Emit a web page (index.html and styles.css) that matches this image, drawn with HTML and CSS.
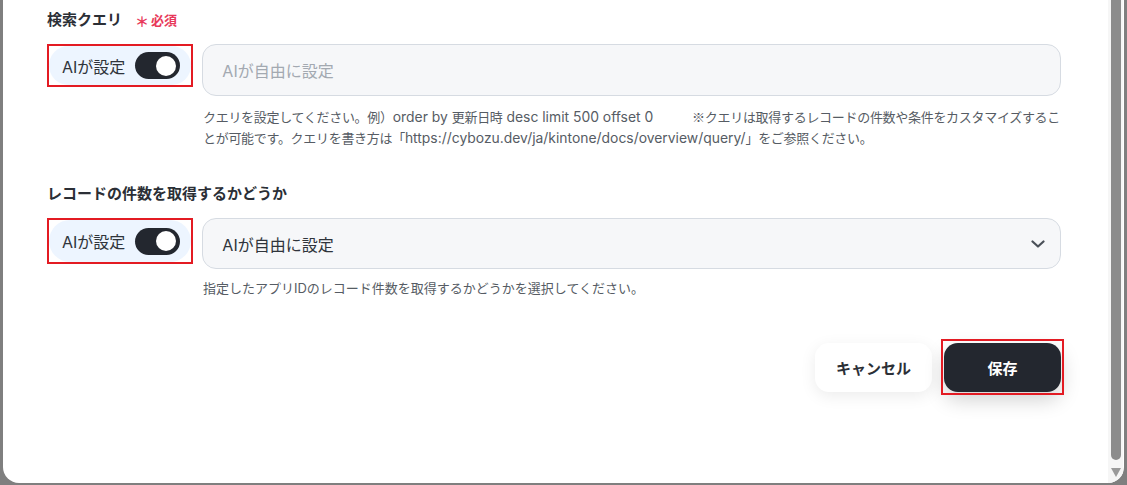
FILE: index.html
```html
<!DOCTYPE html>
<html lang="ja">
<head>
<meta charset="utf-8">
<title>設定</title>
<link rel="stylesheet" href="styles.css">
</head>
<body>
<div class="modal">
  <div class="modal-body">
    <section class="field">
      <div class="field-label">検索クエリ<span class="req"><span class="req-mark">＊</span>必須</span></div>
      <div class="field-row">
        <div class="ai-frame">
          <div class="ai-toggle">
            <span class="ai-text">AIが設定</span>
            <span class="switch"><span class="knob"></span></span>
          </div>
        </div>
        <div class="input placeholder">AIが自由に設定</div>
      </div>
      <p class="help help-query">クエリを設定してください。例）<span class="en">order by </span>更新日時<span class="en"> desc limit 500 offset 0</span>&nbsp;&nbsp;&nbsp;&nbsp;　　<span class="jp">※</span>クエリは取得するレコードの件数や条件をカスタマイズするこ<span>とが可能です。クエリを書き方は「</span><span class="en">https://cybozu.dev/ja/kintone/docs/overview/query/</span>」をご参照ください。</p>
    </section>

    <section class="field field-next">
      <div class="field-label">レコードの件数を取得するかどうか</div>
      <div class="field-row">
        <div class="ai-frame">
          <div class="ai-toggle ai-toggle-tall">
            <span class="ai-text">AIが設定</span>
            <span class="switch"><span class="knob"></span></span>
          </div>
        </div>
        <div class="input select">
          <span>AIが自由に設定</span>
          <svg class="chevron" width="14" height="8" viewBox="0 0 14 8" aria-hidden="true"><path d="M1.5 1.5 L7 6.5 L12.5 1.5" fill="none" stroke="#4a5058" stroke-width="2.2" stroke-linecap="round" stroke-linejoin="round"/></svg>
        </div>
      </div>
      <p class="help help-short">指定したアプリIDのレコード件数を取得するかどうかを選択してください。</p>
    </section>

    <div class="actions">
      <button class="btn btn-cancel" type="button">キャンセル</button>
      <button class="btn btn-save" type="button">保存</button>
    </div>
  </div>
  <div class="scrollbar">
    <div class="scroll-thumb"></div>
    <div class="scroll-arrow"></div>
  </div>
</div>
</body>
</html>
```

FILE: styles.css
```css
html, body {
  margin: 0;
  height: 100%;
}

body {
  background: #7f7f7f;
  font-family: "Inter", "Noto Sans CJK JP", sans-serif;
  color: #2b2f36;
  overflow: hidden;
}

.modal {
  margin-left: 3px;
  width: 1121px;
  height: 483px;
  background: #ffffff;
  border-radius: 0 0 16px 16px;
  display: flex;
  overflow: hidden;
}

.modal-body {
  flex: 1;
  padding: 9px 47px 0 44px;
  min-width: 0;
}

/* form fields */
.field-label {
  display: flex;
  align-items: center;
  font-size: 15px;
  font-weight: 700;
  line-height: 22px;
  color: #2b2f36;
}

.req {
  display: inline-flex;
  align-items: center;
  margin-left: 13px;
  color: #e8385a;
  font-size: 13px;
  font-weight: 600;
}

.req-mark {
  font-size: 14px;
  margin-right: 2px;
  position: relative;
  top: 2px;
}

.field-next {
  margin-top: 34px;
}

.field-row {
  display: flex;
  align-items: flex-start;
  gap: 9px;
  margin-top: 13px;
}

.ai-frame {
  border: 2px solid #e31b23;
  flex: none;
}

.ai-toggle {
  display: flex;
  align-items: center;
  gap: 10px;
  height: 39px;
  padding: 0 11px 0 13px;
  background: #edf5ff;
  border-radius: 21px;
}

.ai-toggle-tall {
  height: 42px;
}

.ai-text {
  font-size: 16px;
  color: #2f343b;
  white-space: nowrap;
}

.switch {
  position: relative;
  width: 45px;
  height: 27px;
  border-radius: 14px;
  background: #23272f;
  flex: none;
}

.knob {
  position: absolute;
  top: 3.5px;
  right: 4px;
  width: 20px;
  height: 20px;
  border-radius: 50%;
  background: #ffffff;
}

.input {
  flex: 1;
  box-sizing: border-box;
  height: 52px;
  border: 1px solid #d6dbe2;
  background: #f6f7f9;
  border-radius: 14px;
  padding: 0 15px 0 19px;
  display: flex;
  align-items: center;
  font-size: 16px;
  color: #2f343b;
}

.placeholder {
  color: #a3a9b1;
}

.select {
  height: 51px;
  justify-content: space-between;
}

.chevron {
  display: block;
}

.help {
  margin: 10px -6px 0 156px;
  font-size: 13px;
  line-height: 21px;
  color: #565c64;
}

.help-query {
  letter-spacing: -0.3px;
}

.help .en {
  font-size: 13.9px;
  letter-spacing: 0;
}

.help .jp {
  font-family: "Noto Sans CJK JP", sans-serif;
}

.help-short {
  margin-top: 9px;
}

/* footer buttons */
.actions {
  display: flex;
  justify-content: flex-end;
  gap: 12px;
  margin-top: 44px;
}

.btn {
  width: 117px;
  height: 49px;
  border: none;
  border-radius: 14px;
  font-family: inherit;
  font-size: 15px;
  font-weight: 700;
  cursor: pointer;
}

.btn-cancel {
  background: #ffffff;
  color: #2b2f36;
  box-shadow: 0 4px 16px rgba(0, 0, 0, 0.08);
}

.btn-save {
  position: relative;
  background: #23272f;
  color: #ffffff;
  box-shadow: 0 8px 20px rgba(0, 0, 0, 0.18);
}

.btn-save::after {
  content: "";
  position: absolute;
  top: -4px;
  right: -3px;
  bottom: -3px;
  left: -3px;
  border: 2px solid #e31b23;
  pointer-events: none;
}

/* scroll track */
.scrollbar {
  width: 15px;
  margin-right: 1px;
  background: #f6f6f6;
  display: flex;
  flex-direction: column;
  align-items: center;
}

.scroll-thumb {
  width: 10px;
  height: 460px;
  background: #8c8c8c;
  border-radius: 0 0 5px 5px;
}

.scroll-arrow {
  margin-top: 8px;
  width: 0;
  height: 0;
  border-left: 5.5px solid transparent;
  border-right: 5.5px solid transparent;
  border-top: 9px solid #9a9a9a;
}
```
